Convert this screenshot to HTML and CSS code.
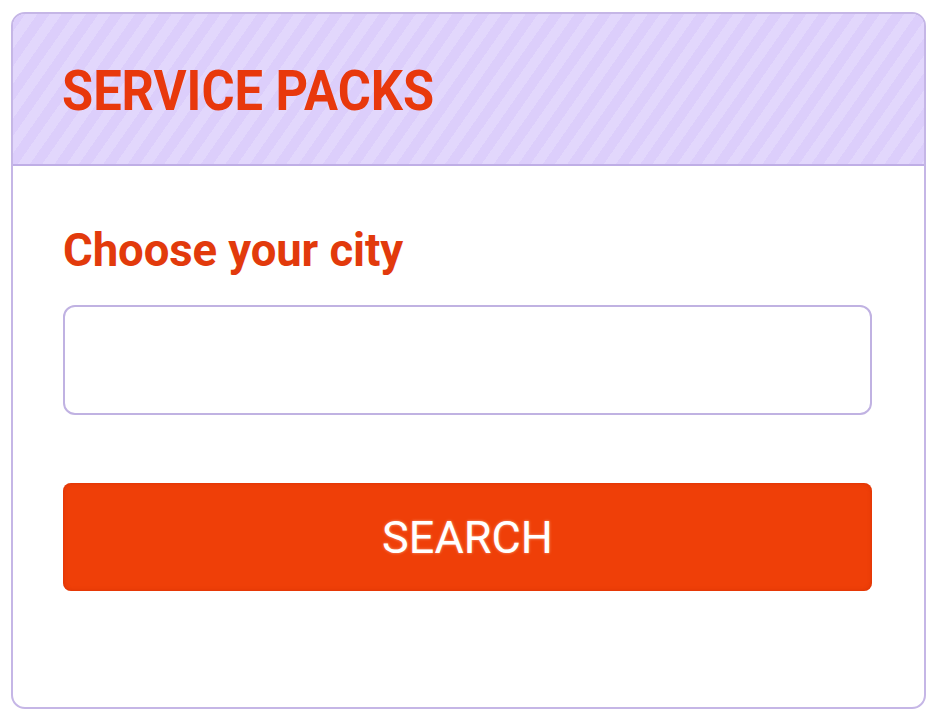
FILE: index.html
```html
<!DOCTYPE html>
<html lang="en">
<head>
<meta charset="utf-8">
<title>Service Packs</title>
<link rel="stylesheet" href="styles.css">
</head>
<body>
<div class="card">
  <div class="card-header">
    <h1 class="title">SERVICE PACKS</h1>
  </div>
  <div class="card-body">
    <label class="label" for="city">Choose your city</label>
    <input class="input" id="city" type="text">
    <button class="btn" type="button">SEARCH</button>
  </div>
</div>
</body>
</html>
```

FILE: styles.css
```css
html, body {
  margin: 0;
  padding: 0;
  background: #ffffff;
}
body {
  width: 938px;
  height: 719px;
  font-family: Roboto, "Liberation Sans", sans-serif;
}
.card {
  box-sizing: border-box;
  margin: 12px 0 0 11px;
  width: 915px;
  height: 697px;
  border: 2px solid #c5b6e6;
  border-radius: 14px;
  overflow: hidden;
  display: flex;
  flex-direction: column;
}
.card-header {
  box-sizing: border-box;
  height: 152px;
  border-bottom: 2px solid #bfaee6;
  background-color: #ddd0fc;
  background-image: repeating-linear-gradient(125deg, #dccefb 0px, #dccefb 10px, #e2d7fc 10px, #e2d7fc 20px);
  display: flex;
  align-items: center;
  padding-left: 49px;
}
.title {
  margin: 0;
  font-size: 55px;
  font-weight: 700;
  color: #e8380c;
  letter-spacing: 0;
  transform: scaleX(0.92);
  transform-origin: left center;
  line-height: 1;
  padding-top: 4px;
}
.card-body {
  display: flex;
  flex-direction: column;
  padding: 0 51px 0 50px;
}
.label {
  margin-top: 58px;
  font-size: 45.5px;
  font-weight: 700;
  color: #e23a0c;
  line-height: 54px;
  letter-spacing: -0.1px;
}
.input {
  box-sizing: border-box;
  margin-top: 27px;
  height: 110px;
  width: 809px;
  border: 2px solid #c0b2e2;
  border-radius: 12px;
  background: #fff;
  outline: none;
}
.btn {
  box-sizing: border-box;
  margin-top: 68px;
  height: 108px;
  width: 809px;
  border: none;
  border-radius: 8px;
  background: #ef3f08;
  box-shadow: inset 0 0 4px rgba(200, 40, 0, 0.6);
  color: #ffffff;
  font-family: Roboto, "Liberation Sans", sans-serif;
  font-size: 45px;
  font-weight: 400;
  text-shadow: 0 0 3px rgba(255, 220, 200, 0.6);
  cursor: pointer;
}
```
